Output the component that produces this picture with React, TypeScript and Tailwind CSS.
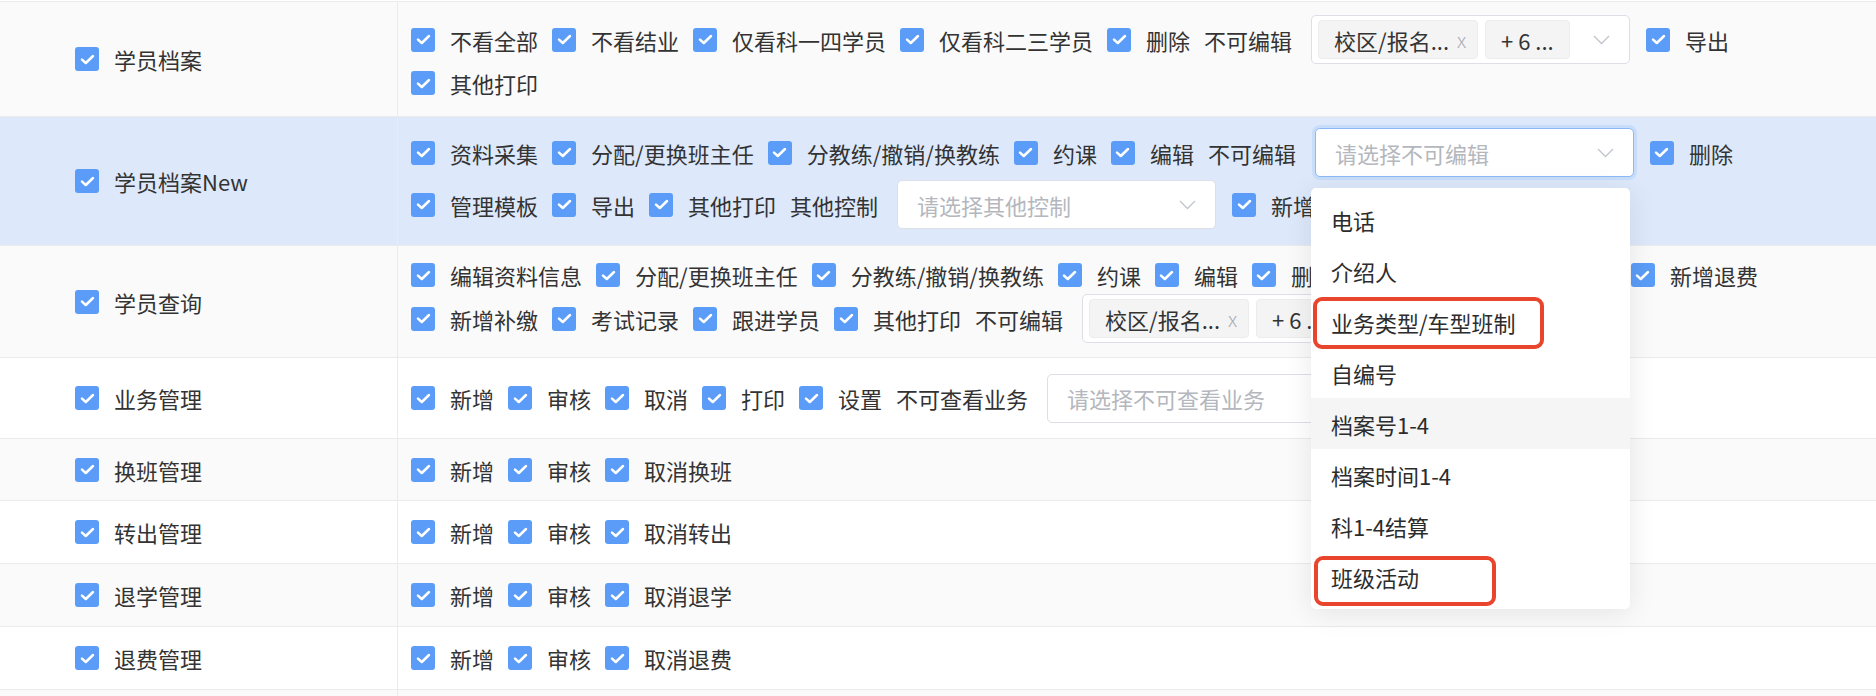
import React from "react";

const Cb = () => (
  <span className="flex h-[24px] w-[24px] shrink-0 items-center justify-center rounded-[3px] bg-[#5a9cf7]">
    <svg width="15" height="11" viewBox="0 0 15 11">
      <path d="M2 5.6 L5.8 9 L13 2" fill="none" stroke="white" strokeWidth="2.5" strokeLinecap="round" strokeLinejoin="round" />
    </svg>
  </span>
);

const Item = ({ t }: { t: string }) => (
  <span className="mr-[14px] flex shrink-0 items-center">
    <Cb />
    <span className="ml-[15px] whitespace-nowrap">{t}</span>
  </span>
);

const Label = ({ t }: { t: string }) => <span className="mr-[19px] shrink-0 whitespace-nowrap">{t}</span>;

const Chevron = () => (
  <svg width="17" height="10" viewBox="0 0 17 10" className="shrink-0">
    <path d="M1 1 L8.5 8.5 L16 1" fill="none" stroke="#c0c4cc" strokeWidth="1.3" />
  </svg>
);

const Tag = ({ t, close, w }: { t: string; close?: boolean; w: string }) => (
  <span className={`flex h-[39px] shrink-0 items-center rounded-[4px] border border-[#ececee] bg-[#f4f4f5] pl-[15px] text-[#333] ${w}`}>
    <span className="whitespace-nowrap">{t}</span>
    {close && <span className="ml-[8px] text-[20px] font-light text-[#a8abb2]">x</span>}
  </span>
);

const Select = ({ placeholder, tags, focused }: { placeholder?: string; tags?: boolean; focused?: boolean }) => (
  <span
    className={`mr-[16px] flex h-[49px] w-[319px] shrink-0 items-center justify-between rounded-[5px] border bg-white pr-[19px] ${
      focused ? "border-[#8bb9f6] shadow-[0_0_0_3px_rgba(160,200,250,0.35)]" : "border-[#dcdfe6]"
    } ${tags ? "pl-[6px]" : "pl-[19px]"}`}
  >
    {tags ? (
      <span className="flex gap-[7px]">
        <Tag t="校区/报名..." close w="w-[160px]" />
        <Tag t="+ 6 ..." w="w-[85px]" />
      </span>
    ) : (
      <span className="whitespace-nowrap text-[#b4b7bd]">{placeholder}</span>
    )}
    <Chevron />
  </span>
);

const Line = ({ h, children, cls = "" }: { h: string; children: React.ReactNode; cls?: string }) => (
  <div className={`flex items-center ${h} ${cls}`}>{children}</div>
);

const Row = ({
  label,
  h,
  bg,
  children,
  contentCls = "justify-center",
  first,
}: {
  label: string;
  h: string;
  bg: string;
  children?: React.ReactNode;
  contentCls?: string;
  first?: boolean;
}) => (
  <div className={`flex border-b border-[#ebebeb] ${first ? "border-t" : ""} ${h} ${bg}`}>
    <div className="flex w-[398px] shrink-0 items-center border-r border-[#ebebeb] pl-[75px]">
      <Cb />
      <span className="ml-[15px] whitespace-nowrap">{label}</span>
    </div>
    <div className={`flex flex-1 flex-col pl-[13px] ${contentCls}`}>{children}</div>
  </div>
);

const options = ["电话", "介绍人", "业务类型/车型班制", "自编号", "档案号1-4", "档案时间1-4", "科1-4结算", "班级活动"];

export default function App() {
  return (
    <div className="relative h-[696px] w-[1876px] overflow-hidden bg-white pt-[1px] font-['Noto_Sans_CJK_SC','Noto_Sans',sans-serif] text-[22px] leading-none text-[#333]">
      <Row label="学员档案" h="h-[116px]" bg="bg-[#fafafa]" first contentCls="justify-start pt-[13px]">
        <Line h="h-[49px]">
          <Item t="不看全部" />
          <Item t="不看结业" />
          <Item t="仅看科一四学员" />
          <Item t="仅看科二三学员" />
          <Item t="删除" />
          <Label t="不可编辑" />
          <Select tags />
          <Item t="导出" />
        </Line>
        <Line h="h-[38px]">
          <Item t="其他打印" />
        </Line>
      </Row>
      <Row label="学员档案New" h="h-[129px]" bg="bg-[#dde9fb]" contentCls="justify-start pt-[11px]">
        <Line h="h-[49px]">
          <Item t="资料采集" />
          <Item t="分配/更换班主任" />
          <Item t="分教练/撤销/换教练" />
          <Item t="约课" />
          <Item t="编辑" />
          <Label t="不可编辑" />
          <Select placeholder="请选择不可编辑" focused />
          <Item t="删除" />
        </Line>
        <Line h="h-[49px]" cls="mt-[3px]">
          <Item t="管理模板" />
          <Item t="导出" />
          <Item t="其他打印" />
          <Label t="其他控制" />
          <Select placeholder="请选择其他控制" />
          <Item t="新增收费" />
        </Line>
      </Row>
      <Row label="学员查询" h="h-[112px]" bg="bg-[#fafafa]" contentCls="justify-start pt-[10px]">
        <Line h="h-[38px]">
          <Item t="编辑资料信息" />
          <Item t="分配/更换班主任" />
          <Item t="分教练/撤销/换教练" />
          <Item t="约课" />
          <Item t="编辑" />
          <Item t="删除" />
          <Item t="新增收费" />
          <Item t="新增转班" />
          <Item t="新增退费" />
        </Line>
        <Line h="h-[49px]">
          <Item t="新增补缴" />
          <Item t="考试记录" />
          <Item t="跟进学员" />
          <Item t="其他打印" />
          <Label t="不可编辑" />
          <Select tags />
        </Line>
      </Row>
      <Row label="业务管理" h="h-[81px]" bg="bg-white">
        <Line h="h-[49px]">
          <Item t="新增" />
          <Item t="审核" />
          <Item t="取消" />
          <Item t="打印" />
          <Item t="设置" />
          <Label t="不可查看业务" />
          <Select placeholder="请选择不可查看业务" />
        </Line>
      </Row>
      {[
        ["换班管理", "取消换班", "h-[62px]", "bg-[#fafafa]"],
        ["转出管理", "取消转出", "h-[63px]", "bg-white"],
        ["退学管理", "取消退学", "h-[63px]", "bg-[#fafafa]"],
        ["退费管理", "取消退费", "h-[63px]", "bg-white"],
      ].map(([l, c, h, bg]) => (
        <Row key={l} label={l} h={h} bg={bg}>
          <Line h="h-[30px]">
            <Item t="新增" />
            <Item t="审核" />
            <Item t={c} />
          </Line>
        </Row>
      ))}
      <div className="flex h-[40px] bg-[#fafafa]">
        <div className="w-[398px] border-r border-[#ebebeb]" />
      </div>

      {/* dropdown overlay */}
      <div className="absolute left-[1311px] top-[188px] h-[421px] w-[319px] rounded-[5px] bg-white py-[6px] shadow-[0_4px_28px_rgba(0,0,0,0.09)]">
        {options.map((o, i) => (
          <div
            key={o}
            className={`flex h-[51px] items-center pl-[20px] text-[#2c2c2c] ${i === 4 ? "bg-[#f5f5f6]" : ""}`}
          >
            {o}
          </div>
        ))}
      </div>
      <div className="pointer-events-none absolute left-[1313px] top-[297px] h-[52px] w-[231px] rounded-[9px] border-[4px] border-[#e8452c]" />
      <div className="pointer-events-none absolute left-[1314px] top-[556px] h-[50px] w-[182px] rounded-[9px] border-[4px] border-[#e8452c]" />
    </div>
  );
}
